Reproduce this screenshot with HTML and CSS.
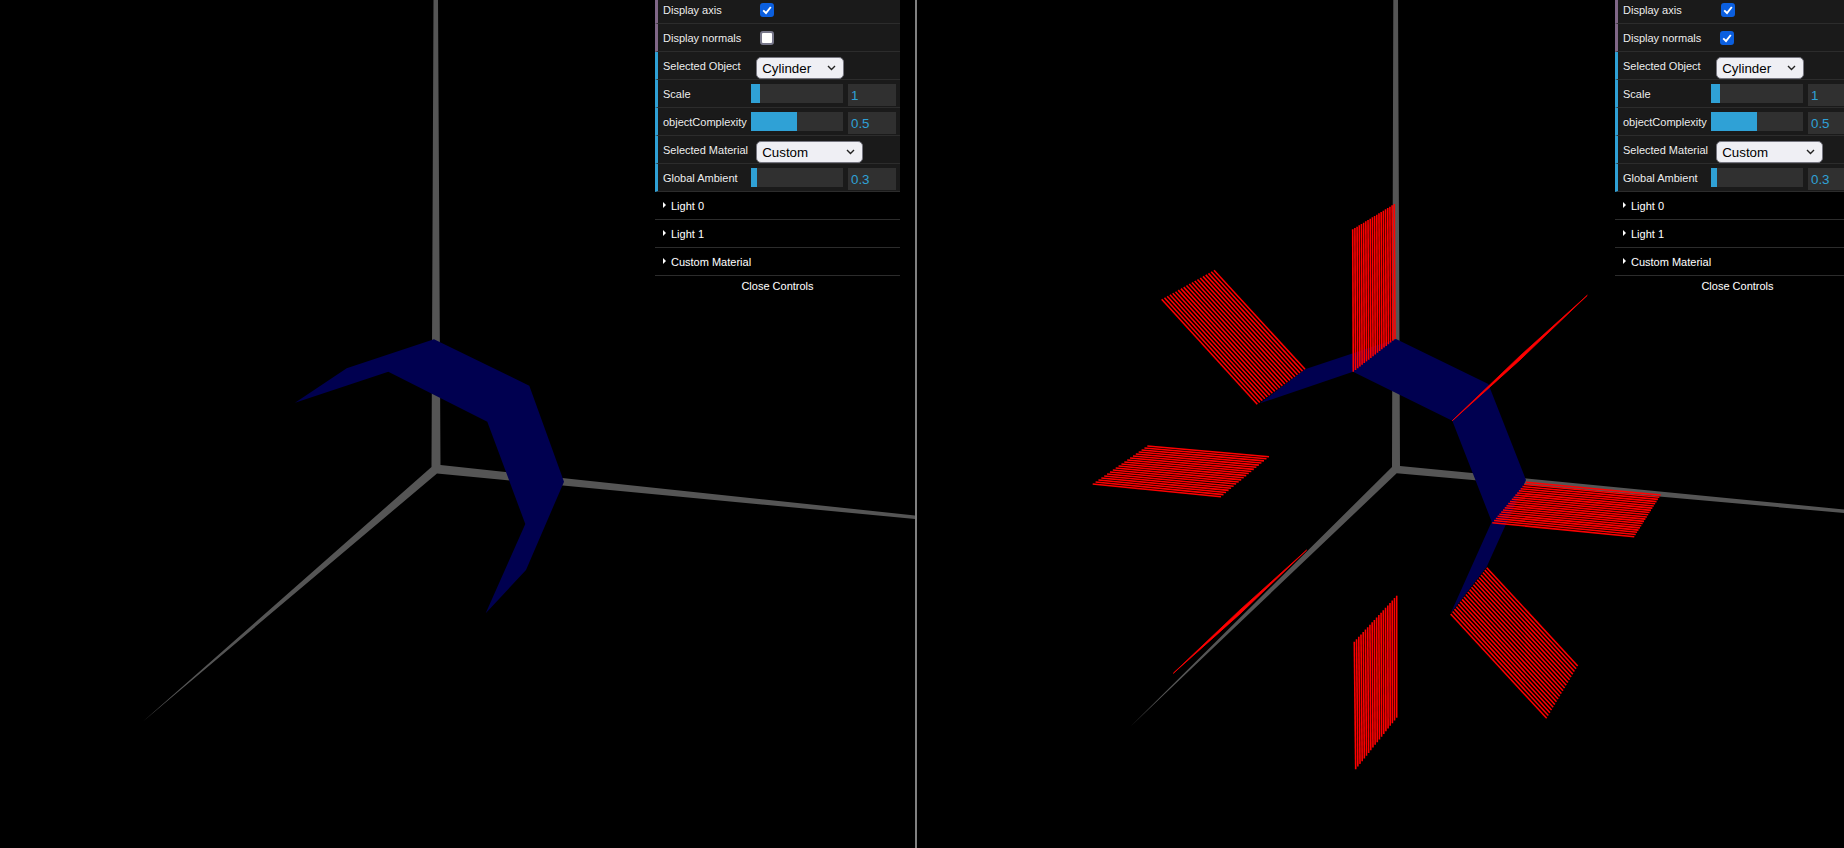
FILE: index.html
```html
<!DOCTYPE html>
<html lang="en">
<head>
<meta charset="utf-8">
<title>Cylinder viewer</title>
<link rel="stylesheet" href="styles.css">
</head>
<body>
<main class="stage">
  <section class="view view-left">
    <svg class="scene" viewBox="0 0 915 848" aria-hidden="true">
      <polygon class="axis" points="433.5,0 438,0 440.5,465 915,515.5 915,519 437,473.5 142.7,721.7 431.5,467"/>
      <polygon class="mesh" points="295,402.7 346.7,368.3 434,339.3 529.3,385.7 564,481.7 526,570 485.7,613.3 525.3,524 487.3,421.7 388.3,371.7"/>
    </svg>
    <div class="gui">
      <div class="row row-bool"><span class="name">Display axis</span><input class="check" type="checkbox" checked></div>
      <div class="row row-bool"><span class="name">Display normals</span><input class="check" type="checkbox"></div>
      <div class="row row-num"><span class="name">Selected Object</span><select class="pick pick-object"><option>Cylinder</option></select></div>
      <div class="row row-num"><span class="name">Scale</span><div class="slider"><div class="fill fill-scale"></div></div><input class="num" type="text" value="1"></div>
      <div class="row row-num"><span class="name">objectComplexity</span><div class="slider"><div class="fill fill-half"></div></div><input class="num" type="text" value="0.5"></div>
      <div class="row row-num"><span class="name">Selected Material</span><select class="pick pick-material"><option>Custom</option></select></div>
      <div class="row row-num"><span class="name">Global Ambient</span><div class="slider"><div class="fill fill-ambient"></div></div><input class="num" type="text" value="0.3"></div>
      <div class="folder">Light 0</div>
      <div class="folder">Light 1</div>
      <div class="folder">Custom Material</div>
      <div class="close">Close Controls</div>
    </div>
  </section>
  <div class="divider"></div>
  <section class="view view-right">
    <svg class="scene" viewBox="917 0 927 848" aria-hidden="true">
      <polygon class="axis" points="1393.3,0 1398,0 1400,466 1844,509.5 1844,513 1396.7,473.3 1130,727 1392,467"/>
      <polygon class="mesh" points="1260,403.3 1305,369.3 1396,339 1488.3,384 1526,480 1486.7,566.7 1450.7,613.3 1491.7,521.7 1452.3,420.7 1353,371.7"/>
      <g class="hatch" data-quad="1352.7 229.3 1353.3 371.7 1394.3 204 1395 339"></g>
      <g class="hatch" data-quad="1161.7 299.3 1257.3 404.3 1214 270.3 1305 369.3"></g>
      <g class="hatch" data-quad="1147.3 446 1269 456.7 1092.7 484 1221 496.7"></g>
      <g class="hatch" data-quad="1526 482.3 1660.7 495 1492.3 522.7 1634.3 536.7"></g>
      <g class="hatch" data-quad="1486.7 567.7 1577.7 666 1450.7 614 1546.7 718.3"></g>
      <g class="hatch" data-quad="1354.3 641.7 1355.7 769.3 1396.7 595.7 1396.7 717.7"></g>
      <polygon class="normal" points="1587.3,295.3 1520,355.9 1452.3,420.7 1520,359.9"/>
      <polygon class="normal" points="1306.7,550 1240,609.9 1173.3,673.3 1240,613.9"/>
    </svg>
    <div class="gui gui-right">
      <div class="row row-bool"><span class="name">Display axis</span><input class="check check-nudge" type="checkbox" checked></div>
      <div class="row row-bool"><span class="name">Display normals</span><input class="check" type="checkbox" checked></div>
      <div class="row row-num"><span class="name">Selected Object</span><select class="pick pick-object"><option>Cylinder</option></select></div>
      <div class="row row-num"><span class="name">Scale</span><div class="slider"><div class="fill fill-scale"></div></div><input class="num" type="text" value="1"></div>
      <div class="row row-num"><span class="name">objectComplexity</span><div class="slider"><div class="fill fill-half"></div></div><input class="num" type="text" value="0.5"></div>
      <div class="row row-num"><span class="name">Selected Material</span><select class="pick pick-material"><option>Custom</option></select></div>
      <div class="row row-num"><span class="name">Global Ambient</span><div class="slider"><div class="fill fill-ambient"></div></div><input class="num" type="text" value="0.3"></div>
      <div class="folder">Light 0</div>
      <div class="folder">Light 1</div>
      <div class="folder">Custom Material</div>
      <div class="close">Close Controls</div>
    </div>
  </section>
</main>
<script src="hatch.js"></script>
</body>
</html>
```
FILE: styles.css
```css
* { box-sizing: border-box; }
html, body { margin: 0; height: 100%; background: #000; overflow: hidden; }
.stage { display: flex; width: 1844px; height: 848px; background: #000; }
.view { position: relative; height: 848px; overflow: hidden; }
.view-left { width: 915px; flex: none; }
.view-right { flex: 1; }
.divider { width: 2px; flex: none; background: #808080; }
.scene { position: absolute; inset: 0; width: 100%; height: 100%; display: block; }
.axis { fill: #555; }
.mesh { fill: #000050; }
.hatch line { stroke: #f00; stroke-width: 1.6; }
.normal { fill: #f00; stroke: #f00; stroke-width: .8; }

.gui {
  position: absolute; top: -4px; left: 655px; width: 245px;
  font: 11px "Liberation Sans", Arial, sans-serif;
  color: #eee; text-shadow: 0 -1px 0 #111;
}
.gui-right { left: 698px; }
.row {
  display: flex; align-items: flex-start; height: 28px;
  padding: 0 4px 0 5px; background: #1a1a1a;
  border-bottom: 1px solid #2c2c2c; border-left: 3px solid #2fa1d6;
}
.row-bool { border-left-color: #806787; }
.name { width: 93.2px; flex: none; white-space: nowrap; line-height: 29px; }
.check {
  appearance: none; width: 14px; height: 14px; margin: 7px 0 0 4px;
  background: #fff; border: 2px solid #77778a; border-radius: 3px;
}
.check:checked {
  border-color: #0b5fdf; background-color: #0b5fdf;
  background-image: url("data:image/svg+xml,%3Csvg xmlns='http://www.w3.org/2000/svg' viewBox='0 0 10 10'%3E%3Cpath d='M1.2 5.4 4 8 8.8 2' fill='none' stroke='white' stroke-width='1.9'/%3E%3C/svg%3E");
  background-size: 100% 100%;
}
.check-nudge { margin-left: 5px; }
.pick {
  appearance: none; margin: 5px 0 0; height: 22px; padding: 0 0 0 5px;
  font: 13.333px "Liberation Sans", Arial, sans-serif; color: #000;
  background-color: #efeff4; border: 1px solid #767680; border-radius: 5px;
  background-image: url("data:image/svg+xml,%3Csvg xmlns='http://www.w3.org/2000/svg' viewBox='0 0 9 6'%3E%3Cpath d='M1 1 4.5 4.5 8 1' fill='none' stroke='%23222' stroke-width='1.4'/%3E%3C/svg%3E");
  background-repeat: no-repeat; background-size: 9px 6px;
  background-position: right 7px center;
}
.pick-object { width: 88px; }
.pick-material { width: 106.5px; }
.slider { width: 92px; height: 19px; margin: 4px 0 0 -5.2px; background: #303030; flex: none; }
.fill { height: 100%; background: #2fa1d6; }
.fill-scale { width: 9px; }
.fill-half { width: 46px; }
.fill-ambient { width: 6px; }
.num {
  width: 48px; height: 22px; margin: 4px 0 0 5px; padding: 1px 0 0 3px; border: 0; outline: 0;
  background: #303030; color: #2fa1d6; font: 13.333px "Liberation Sans", Arial, sans-serif;
}
.folder {
  position: relative; height: 28px; padding-left: 16px; line-height: 29px;
  background: #000; color: #fff; border-bottom: 1px solid #2c2c2c;
}
.folder::before {
  content: ""; position: absolute; left: 8px; top: 10px;
  border-left: 3px solid #fff; border-top: 3px solid transparent; border-bottom: 3px solid transparent;
}
.close { height: 20px; line-height: 21px; text-align: center; color: #fff; background: #000; }
```
FILE: hatch.js
```js
// Draws the normals of each face as a run of parallel lines between two edges.
var NS = 'http://www.w3.org/2000/svg';
var COUNT = 20;
document.querySelectorAll('.hatch').forEach(function (group) {
  var q = group.dataset.quad.split(' ').map(Number);
  for (var i = 0; i < COUNT; i++) {
    var t = i / (COUNT - 1);
    var line = document.createElementNS(NS, 'line');
    line.setAttribute('x1', q[0] + (q[4] - q[0]) * t);
    line.setAttribute('y1', q[1] + (q[5] - q[1]) * t);
    line.setAttribute('x2', q[2] + (q[6] - q[2]) * t);
    line.setAttribute('y2', q[3] + (q[7] - q[3]) * t);
    group.appendChild(line);
  }
});
```
